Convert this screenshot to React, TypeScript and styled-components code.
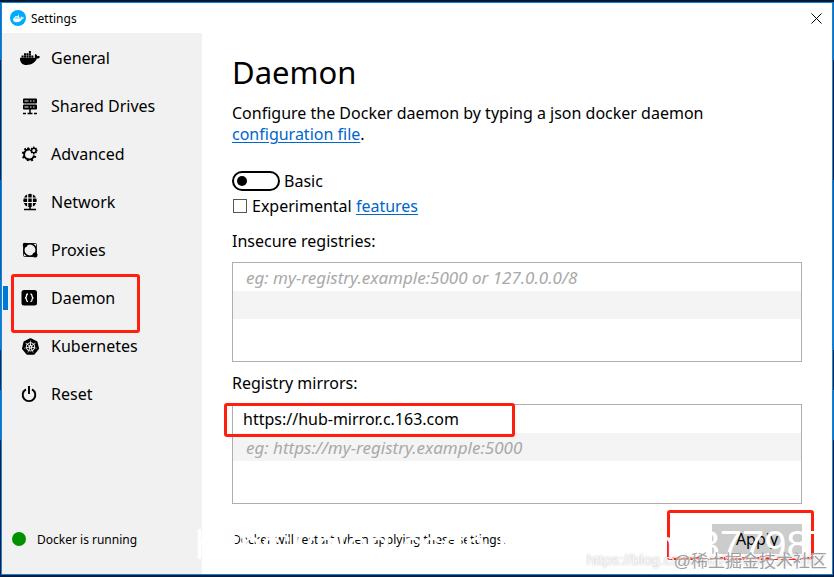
import React, { useState } from "react";
import styled, { createGlobalStyle, css } from "styled-components";
import { FaDocker } from "react-icons/fa";
import { SiKubernetes } from "react-icons/si";

const ui = `"Noto Sans", "Open Sans", sans-serif`;

const GlobalStyle = createGlobalStyle`
  * { box-sizing: border-box; }
  body { margin: 0; font-family: ${ui}; font-size: 16px; color: #000; }
  button, input { font: inherit; color: inherit; }
`;

const Desktop = styled.div`
  position: relative;
  display: flex;
  min-height: 100vh;
  padding: 2px 1px;
  overflow: hidden;
  background: linear-gradient(#001b38 0 2px, #0f6fc0 2px 60px, #041c3c 60px 180px, #0a5fae 180px 280px, #0c7ad2 280px 350px, #06294f 350px 390px, #0a72c8 390px 440px, #021c3d 440px);
`;

const Window = styled.div`
  flex: 1;
  min-width: 0;
  display: flex;
  flex-direction: column;
  border: 1px solid #1883d7;
  background: #fff;
`;

const TitleBar = styled.header`
  display: flex;
  align-items: center;
  gap: 5px;
  height: 30px;
  padding: 0 8px;
  font-size: 12px;
`;

const AppBadge = styled.span`
  display: grid;
  place-items: center;
  width: 16px;
  height: 16px;
  border-radius: 50%;
  background: #00aaff;
  color: #fff;
`;

const CloseButton = styled.button`
  display: grid;
  margin-left: auto;
  padding: 2px;
  border: 0;
  background: none;
`;

const Body = styled.div`
  flex: 1;
  display: flex;
`;

const Sidebar = styled.aside`
  flex: 0 0 200px;
  display: flex;
  flex-direction: column;
  justify-content: space-between;
  background: #f1f1f1;
`;

const Nav = styled.nav`
  display: flex;
  flex-direction: column;
  padding-top: 1px;
`;

const NavButton = styled.button<{ $active: boolean }>`
  position: relative;
  display: flex;
  align-items: center;
  gap: 10px;
  height: 48px;
  padding: 0 17px;
  border: 0;
  background: none;
  text-align: left;

  svg { flex: none; }

  ${(p) =>
    p.$active &&
    css`
      &::before {
        content: "";
        position: absolute;
        left: 1px;
        top: 12px;
        width: 5px;
        height: 24px;
        background: #0078d7;
      }
    `}
`;

const Highlight = styled.span<{ $inset: string }>`
  position: absolute;
  inset: ${(p) => p.$inset};
  border: 3px solid #ff1f0f;
  border-radius: 3px;
  pointer-events: none;
`;

const Status = styled.div`
  display: flex;
  align-items: center;
  gap: 11px;
  height: 30px;
  margin: 0 10px 20px;
  font-size: 12px;
`;

const StatusDot = styled.span`
  width: 14px;
  height: 14px;
  border-radius: 50%;
  background: #009100;
`;

const Main = styled.main`
  flex: 1;
  min-width: 0;
  display: flex;
  flex-direction: column;
  padding: 16px 30px 20px;
`;

const Heading = styled.h1`
  margin: 0 0 8px;
  font-size: 31px;
  font-weight: 400;
  line-height: 46px;
`;

const Intro = styled.p`
  margin: 0 0 23px;
  max-width: 500px;
  line-height: 21px;
`;

const Link = styled.a`
  color: #0066cc;
  text-underline-offset: 2px;
`;

const Option = styled.div<{ $gap: number }>`
  display: flex;
  align-items: center;
  gap: ${(p) => p.$gap}px;
  height: 25px;
`;

const Toggle = styled.input`
  appearance: none;
  display: flex;
  align-items: center;
  width: 48px;
  height: 20px;
  margin: 0;
  padding: 0 3px;
  border: 2px solid #000;
  border-radius: 10px;

  &::before {
    content: "";
    width: 10px;
    height: 10px;
    border-radius: 50%;
    background: #000;
  }
  &:checked { justify-content: flex-end; }
`;

const Tick = styled.input`
  appearance: none;
  width: 14px;
  height: 14px;
  margin: 0 0 0 1px;
  border: 1px solid #555;
  background: #fff;
  &:checked { background: #0078d7; }
`;

const Field = styled.section`
  display: flex;
  flex-direction: column;
`;

const FieldName = styled.h2`
  margin: 0;
  font-size: 16px;
  font-weight: 400;
  line-height: 24px;
  padding: 9px 0;
`;

const ListBox = styled.div`
  position: relative;
  height: 100px;
  border: 1px solid #aeaeae;
`;

const Fields = styled.div`
  display: flex;
  flex-direction: column;
  padding-top: 2px;
  margin-bottom: 12px;
`;

const Entry = styled.input<{ $band?: boolean }>`
  display: block;
  width: 100%;
  height: 28px;
  padding: 0 10px;
  border: 0;
  outline: 0;
  background: ${(p) => (p.$band ? "#f4f4f4" : "#fff")};
  &:placeholder-shown { font-size: 17px; }
  &::placeholder {
    color: #a9a9a9;
    opacity: 1;
    font-style: italic;
    text-indent: 3px;
  }
`;

const Footer = styled.footer`
  display: flex;
  align-items: center;
  justify-content: space-between;
  margin-top: auto;
  font-size: 12px;
`;

const ApplyArea = styled.div`
  position: relative;
`;

const ApplyButton = styled.button`
  display: block;
  width: 90px;
  height: 30px;
  padding: 0;
  border: 0;
  background: #ccc;
  font-size: 16px;
`;

const Mark = styled.span<{ $kind: "large" | "small" | "site" }>`
  position: absolute;
  white-space: nowrap;
  pointer-events: none;
  ${(p) =>
    p.$kind === "large" &&
    css`
      left: 195px;
      bottom: 7px;
      font: 40px/50px "Liberation Sans", sans-serif;
      color: #fff;
    `}
  ${(p) =>
    p.$kind === "small" &&
    css`
      right: 9px;
      bottom: 7px;
      font: 15px/20px "Liberation Sans", sans-serif;
      color: rgba(255, 255, 255, 0.85);
      text-shadow: 0 0 2px rgba(0, 0, 0, 0.3);
    `}
  ${(p) =>
    p.$kind === "site" &&
    css`
      right: 7px;
      bottom: 3px;
      font: 17px/24px "Liberation Sans", "Noto Sans CJK SC", sans-serif;
      color: #a0a0a0;
      text-shadow: 1px 1px 1px #fff;
    `}
`;

const DrivesIcon = () => (
  <svg width="22" height="18" viewBox="0 0 22 18">
    <rect x="4" y="1.500" width="14" height="5" rx="1" />
    <rect x="4" y="7.500" width="14" height="5" rx="1" />
    <path d="M5.500 4h4M5.500 10h4M11 4h1.500M14 4h1.500M11 10h1.500M14 10h1.500" stroke="#f1f1f1" strokeWidth="1.200" />
    <path d="M11 12v4M4 16.500h3M8.500 16.500h5M15 16.500h3" stroke="#000" strokeWidth="1.500" />
  </svg>
);

const GearsIcon = () => (
  <svg width="22" height="18" viewBox="0 0 22 18" fill="none" stroke="#000">
    <path d="M11 4.500A5 5 0 1 0 15 10.500" strokeWidth="2" />
    <path d="M7 5 5.500 3.500M5.500 8 3 7.500M5.500 11.500 3.500 12.800M9 14 8.500 16M12.500 14l1 2M15 11.500l2 .6M9.500 4.500 9 2.500" strokeWidth="2" />
    <circle cx="14.800" cy="5.500" r="2.300" strokeWidth="1.500" />
    <path d="M14.800 1.500v1.500M14.800 8v1.500M11 5.500h1.500M17 5.500h1.500M12.200 3l1 1M17.500 3l-1 1M12.200 8l1-1M17.500 8l-1-1" strokeWidth="1.300" />
  </svg>
);

const GlobeIcon = () => (
  <svg width="22" height="18" viewBox="0 0 22 18">
    <circle cx="11" cy="7.500" r="6.700" />
    <path d="M3 5h16M3 9.500h16M8.700 0v15M13.300 0v15" fill="none" stroke="#f1f1f1" strokeWidth="1.200" />
    <path d="M11 13v3M5 16.500h12" stroke="#000" strokeWidth="1.500" />
  </svg>
);

const ProxyIcon = () => (
  <svg width="22" height="18" viewBox="0 0 22 18">
    <rect x="4.500" y="2.500" width="13" height="13" rx="1" fill="none" stroke="#000" strokeWidth=".8" />
    <circle cx="11" cy="9" r="6.200" fill="#f1f1f1" stroke="#000" strokeWidth="1.500" />
    <circle cx="6" cy="4" r="2.300" />
    <circle cx="16" cy="14" r="2.500" />
  </svg>
);

const DaemonIcon = () => (
  <svg width="22" height="18" viewBox="0 0 22 18">
    <rect x="2.500" y="1" width="15.500" height="15.500" rx="2.500" />
    <path d="M9 5C7.500 5 7.500 5.600 7.500 7S7.200 8.800 6 8.800C7.200 8.800 7.500 9.400 7.500 10.800S7.500 12.500 9 12.500M11.500 5c1.500 0 1.500.6 1.500 2s.3 1.800 1.500 1.800c-1.200 0-1.500.6-1.500 2s0 1.700-1.500 1.700" fill="none" stroke="#fff" strokeWidth="1.300" />
  </svg>
);

const PowerIcon = () => (
  <svg width="22" height="18" viewBox="0 0 22 18" fill="none" stroke="#000" strokeWidth="1.900">
    <path d="M7 4.300a6.300 6.300 0 1 0 6 0M10 1v8" />
  </svg>
);

const IconSlot = styled.span`
  display: flex;
  justify-content: center;
  width: 22px;
`;

const sections = [
  { name: "General", icon: <IconSlot><FaDocker size={20} /></IconSlot> },
  { name: "Shared Drives", icon: <DrivesIcon /> },
  { name: "Advanced", icon: <GearsIcon /> },
  { name: "Network", icon: <GlobeIcon /> },
  { name: "Proxies", icon: <ProxyIcon /> },
  { name: "Daemon", icon: <DaemonIcon /> },
  { name: "Kubernetes", icon: <IconSlot><SiKubernetes size={17} /></IconSlot> },
  { name: "Reset", icon: <PowerIcon /> },
];

export default function App() {
  const [active, setActive] = useState("Daemon");
  return (
    <Desktop>
      <GlobalStyle />
      <Window>
        <TitleBar>
          <AppBadge><FaDocker size={11} /></AppBadge>
          Settings
          <CloseButton aria-label="Close">
            <svg width="11" height="11" viewBox="0 0 11 11" stroke="#000">
              <path d="M.5.5l10 10M10.500.5l-10 10" />
            </svg>
          </CloseButton>
        </TitleBar>
        <Body>
          <Sidebar>
            <Nav>
              {sections.map((s) => (
                <NavButton key={s.name} $active={s.name === active} onClick={() => setActive(s.name)}>
                  {s.icon}
                  {s.name}
                  {s.name === "Daemon" && <Highlight $inset="0 62px -11px 9px" />}
                </NavButton>
              ))}
            </Nav>
            <Status><StatusDot />Docker is running</Status>
          </Sidebar>
          <Main>
            <Heading>Daemon</Heading>
            <Intro>
              Configure the Docker daemon by typing a json docker daemon{" "}
              <Link href="#configuration">configuration file</Link>.
            </Intro>
            <Option $gap={4}>
              <Toggle id="basic" type="checkbox" role="switch" />
              <label htmlFor="basic">Basic</label>
            </Option>
            <Option $gap={5}>
              <Tick id="experimental" type="checkbox" />
              <span>
                <label htmlFor="experimental">Experimental</label> <Link href="#features">features</Link>
              </span>
            </Option>
            <Fields>
              <Field>
                <FieldName id="insecure">Insecure registries:</FieldName>
                <ListBox>
                  <Entry aria-labelledby="insecure" placeholder="eg: my-registry.example:5000 or 127.0.0.0/8" />
                  <Entry aria-labelledby="insecure" $band />
                </ListBox>
              </Field>
              <Field>
                <FieldName id="mirrors">Registry mirrors:</FieldName>
                <ListBox>
                  <Entry aria-labelledby="mirrors" defaultValue="https://hub-mirror.c.163.com" />
                  <Entry aria-labelledby="mirrors" $band placeholder="eg: https://my-registry.example:5000" />
                  <Highlight $inset="-2px 286px 66px -9px" />
                </ListBox>
              </Field>
            </Fields>
            <Footer>
              <span>Docker will restart when applying these settings.</span>
              <ApplyArea>
                <ApplyButton>Apply</ApplyButton>
                <Highlight $inset="-14px -12px -6px -45px" />
              </ApplyArea>
            </Footer>
          </Main>
        </Body>
      </Window>
      <Mark $kind="large">https://blog.csdn.net/weixin_377987</Mark>
      <Mark $kind="small">https://blog.csdn.net/weixin_377987</Mark>
      <Mark $kind="site">@稀土掘金技术社区</Mark>
    </Desktop>
  );
}
